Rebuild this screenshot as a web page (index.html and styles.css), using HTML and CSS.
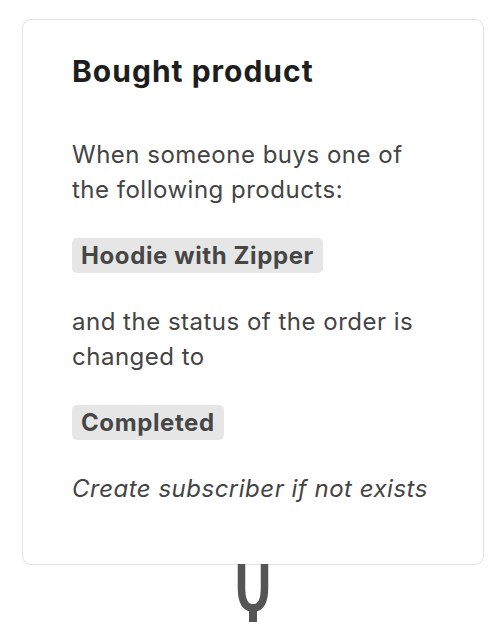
FILE: index.html
```html
<!DOCTYPE html>
<html lang="en">
<head>
<meta charset="utf-8">
<link rel="stylesheet" href="styles.css">
</head>
<body>
<div class="wrap">
  <div class="card">
    <h1 class="title">Bought product</h1>
    <p class="text">When someone buys one of the following products:</p>
    <div class="pills"><span class="pill">Hoodie with Zipper</span></div>
    <p class="text">and the status of the order is changed to</p>
    <div class="pills"><span class="pill">Completed</span></div>
    <p class="text note">Create subscriber if not exists</p>
  </div>
  <svg class="connector" width="34" height="58" viewBox="0 0 34 58">
    <path d="M5.5 0 V24 Q5.5 44 17 44 Q28.5 44 28.5 24 V0" fill="none" stroke="#555" stroke-width="7.5"/>
    <rect x="13" y="40" width="8" height="18" fill="#555"/>
  </svg>
</div>
</body>
</html>
```
FILE: styles.css
```css
html, body {
  margin: 0;
  padding: 0;
  background: #fff;
}
body {
  font-family: Inter, "Noto Sans", sans-serif;
  color: #444;
}
.wrap {
  display: flex;
  flex-direction: column;
  align-items: center;
  width: 462px;
  margin-left: 22px;
  padding-top: 19px;
}
.card {
  box-sizing: border-box;
  width: 462px;
  height: 546px;
  border: 1px solid #e2e2e2;
  border-radius: 9px;
  padding: 31px 48px 0 49px;
  display: flex;
  flex-direction: column;
  align-items: flex-start;
  gap: 31px;
}
.title {
  margin: 0 0 15px;
  font-size: 30px;
  line-height: 40px;
  font-weight: 700;
  letter-spacing: 1px;
  color: #1e1e1e;
}
.text {
  margin: 0;
  font-size: 24px;
  line-height: 35px;
  letter-spacing: 0.5px;
}
.note {
  font-style: italic;
}
.pills {
  display: flex;
}
.pill {
  display: inline-block;
  background: #e6e6e6;
  border-radius: 5px;
  padding: 0 9px;
  font-size: 24px;
  line-height: 35px;
  font-weight: 700;
  letter-spacing: 0.6px;
  color: #464646;
}
.connector {
  display: block;
  margin-top: -1px;
}
```
